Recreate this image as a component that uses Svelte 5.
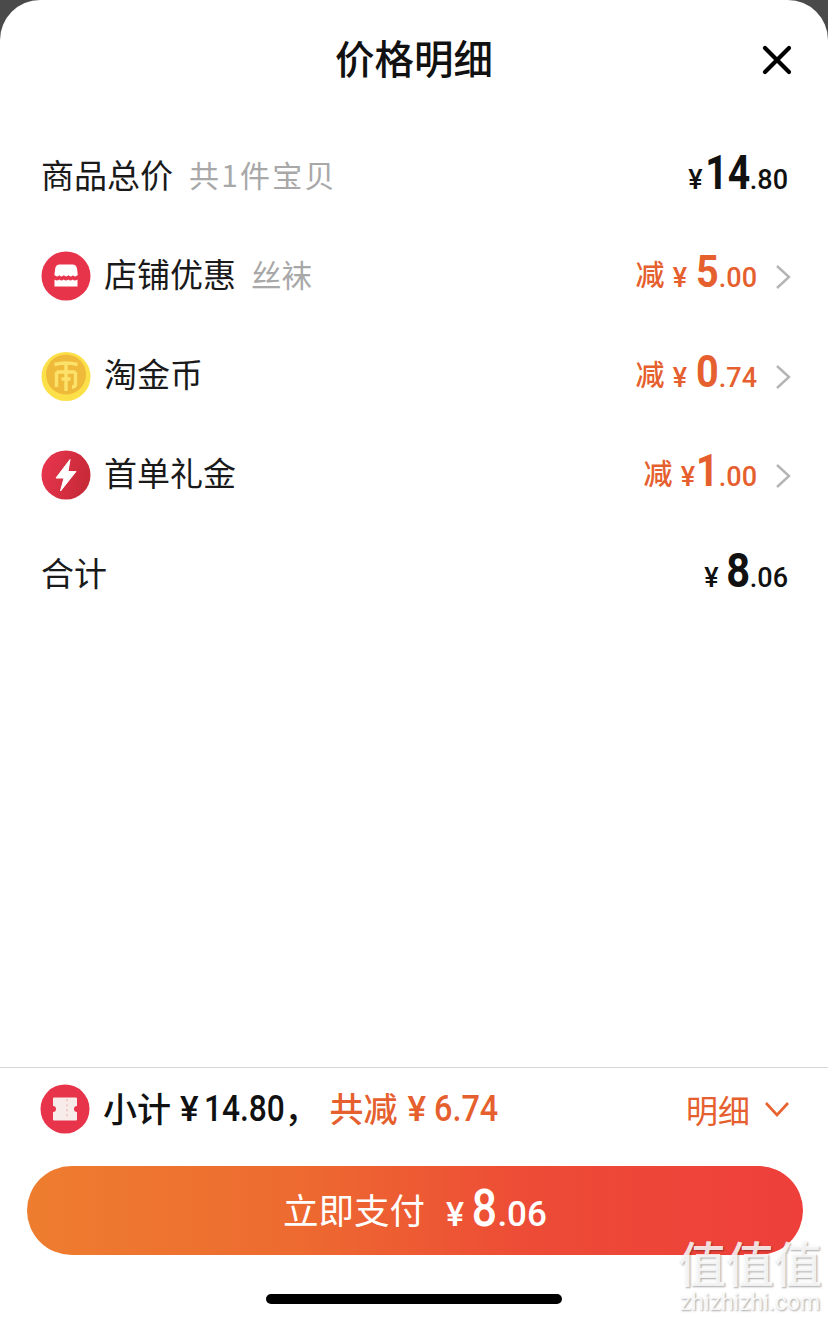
<script>
  const rows = [
    { label: "店铺优惠", note: "丝袜", int: "5", dec: ".00", icon: "shop" },
    { label: "淘金币", note: "", int: "0", dec: ".74", icon: "coin" },
    { label: "首单礼金", note: "", int: "1", dec: ".00", icon: "bolt" },
  ];
</script>

<div class="sheet">
  <header class="head">
    <h1>价格明细</h1>
    <svg class="close" viewBox="0 0 30 30" width="30" height="30">
      <path d="M3 3 L27 27 M27 3 L3 27" stroke="#000" stroke-width="4.2" stroke-linecap="round" />
    </svg>
  </header>

  <section class="list">
    <div class="row">
      <div class="left">
        <span class="label">商品总价</span>
        <span class="note wide">共1件宝贝</span>
      </div>
      <div class="price">
        <span class="yen">¥</span><span class="int two">14</span><span class="dec">.80</span>
      </div>
    </div>

    {#each rows as row}
      <div class="row">
        <div class="left">
          {#if row.icon === "shop"}
            <svg class="icon" viewBox="0 0 50 50">
              <circle cx="25" cy="25" r="24.5" fill="#e8344a" />
              <path d="M18.500 13.500h13c2.500 0 4 1.500 4.500 4l.8 6.500c-2 1.800-3.200 1.800-4.800.2-1.600 1.600-3.200 1.600-4.600.1-1.500 1.500-3.100 1.500-4.600 0-1.400 1.500-3 1.500-4.600-.1-1.600 1.600-2.800 1.600-4.800-.2l.8-6.500c.5-2.500 2-4 4.300-4z" fill="#fff" />
              <path d="M13.500 28.500c2 1.400 3.300 1.400 4.800 0 1.500 1.400 3 1.400 4.400 0 1.500 1.400 3 1.400 4.600 0 1.500 1.400 3 1.400 4.400 0 1.500 1.400 2.800 1.400 4.800 0v7h-23z" fill="#fff" />
            </svg>
          {:else if row.icon === "coin"}
            <svg class="icon" viewBox="0 0 50 50">
              <circle cx="25" cy="25.500" r="24.500" fill="#fbe04a" />
              <circle cx="25" cy="23.500" r="20" fill="#efba3a" />
              <path d="M13.500 13.500q11.500-3 23 0M15.500 21h19M15.500 21v15M34.500 21v12q0 3-3.500 3M25 13v27M20.500 28h9" stroke="#fce26a" stroke-width="3.400" fill="none" />
            </svg>
          {:else}
            <svg class="icon" viewBox="0 0 50 50">
              <defs>
                <linearGradient id="boltbg" x1="0" y1="0" x2="1" y2="0.300">
                  <stop offset="0" stop-color="#ea3650" />
                  <stop offset="1" stop-color="#c82a38" />
                </linearGradient>
              </defs>
              <circle cx="25" cy="25" r="24.500" fill="url(#boltbg)" />
              <path d="M29 9.500 L15 28 H23 L19.500 41 L35 21.500 H27 Z" fill="#fff" stroke="#fff" stroke-width="1" stroke-linejoin="round" />
            </svg>
          {/if}
          <span class="label">{row.label}</span>
          {#if row.note}<span class="note">{row.note}</span>{/if}
        </div>
        <div class="price orange">
          <span class="minus">减</span><span class="yen">¥</span><span class="int" class:one={row.int === "1"}>{row.int}</span><span class="dec">{row.dec}</span>
          <svg class="chev" viewBox="0 0 16 26" width="16" height="26">
            <path d="M2 2 L14 13 L2 24" fill="none" stroke="#b4b4b4" stroke-width="2.400" />
          </svg>
        </div>
      </div>
    {/each}

    <div class="row">
      <div class="left"><span class="label">合计</span></div>
      <div class="price">
        <span class="yen">¥</span><span class="int">8</span><span class="dec">.06</span>
      </div>
    </div>
  </section>

  <footer class="foot">
    <div class="summary">
      <svg class="icon" viewBox="0 0 50 50">
        <circle cx="25" cy="25" r="24.500" fill="#e8344a" />
        <path d="M14 13.500h22a1 1 0 0 1 1 1v7.500a3 3 0 0 0 0 6v7.500a1 1 0 0 1-1 1H14a1 1 0 0 1-1-1V28a3 3 0 0 0 0-6v-7.500a1 1 0 0 1 1-1z" fill="#f8ecea" />
        <path d="M27 15v20" stroke="#f0c8c4" stroke-width="1.500" stroke-dasharray="2.500 2.500" />
      </svg>
      <span class="sub">小计</span><span class="sub-yen">¥</span><span class="sub-num">14.80</span><span class="sub-comma">，</span>
      <span class="saved">共减<span class="saved-yen">¥</span><span class="saved-num">6.74</span></span>
      <span class="detail">明细
        <svg viewBox="0 0 26 16" width="26" height="16">
          <path d="M2 2 L13 14 L24 2" fill="none" stroke="#e8632f" stroke-width="2.600" />
        </svg>
      </span>
    </div>
    <button class="pay">
      <span class="pay-text">立即支付</span>
      <span class="pay-yen">¥</span><span class="pay-int">8</span><span class="pay-dec">.06</span>
    </button>
    <div class="home"></div>
  </footer>

  <div class="mark">
    <div class="mark-big">值值值</div>
    <div class="mark-url">zhizhizhi.com</div>
  </div>
</div>

<style>
  :global(body) {
    margin: 0;
    background: #4a4a4a;
  }

  .sheet {
    position: relative;
    width: 828px;
    height: 1320px;
    background: #fff;
    border-radius: 40px 40px 0 0;
    display: flex;
    flex-direction: column;
    overflow: hidden;
    font-family: "Noto Sans CJK SC", "Noto Sans", sans-serif;
    color: #111;
  }

  .head {
    position: relative;
    height: 118px;
    flex: none;
    display: flex;
    justify-content: center;
    align-items: center;
  }

  h1 {
    margin: 0 0 5px;
    font-size: 39.500px;
    font-weight: 500;
    line-height: 1;
  }

  .close {
    position: absolute;
    right: 36px;
    top: 45px;
  }

  .list {
    margin-top: 9px;
    flex: 1;
  }

  .row {
    height: 99.5px;
    padding: 0 36px 0 41px;
    display: flex;
    align-items: center;
    justify-content: space-between;
  }

  .left {
    display: flex;
    align-items: center;
  }

  .icon {
    width: 50px;
    height: 50px;
    flex: none;
    margin-right: 13px;
  }

  .label {
    font-size: 33px;
    line-height: 1;
    color: #1a1a1a;
    padding-bottom: 5px;
  }

  .note {
    font-size: 30.500px;
    line-height: 1;
    color: #a8a8a8;
    margin-left: 15px;
    padding-bottom: 5px;
  }

  .note.wide {
    font-size: 30px;
    letter-spacing: 2.200px;
    margin-left: 16px;
  }

  .price {
    display: flex;
    align-items: baseline;
    font-family: Roboto, "Noto Sans", sans-serif;
    color: #111;
    padding-right: 4px;
    padding-bottom: 8px;
    position: relative;
    font-weight: 500;
  }

  .price .yen {
    font-size: 27px;
    margin-right: 5px;
  }

  /* the numerals in the shot are narrower than any installed face */
  .price .int {
    font-size: 49px;
    font-weight: 700;
    line-height: 1;
    transform: scaleX(0.85);
    transform-origin: right;
    margin-left: -2px;
  }

  .price .int.two {
    transform: scaleX(0.8);
    margin-left: -14px;
  }

  .price .dec {
    font-size: 27px;
  }

  .price.orange {
    color: #e5602e;
    padding-right: 35px;
  }

  .price.orange .yen {
    margin-right: 8px;
  }

  .price.orange .int {
    font-size: 45px;
    transform: scaleX(0.88);
    margin-left: -2px;
  }

  .price.orange .int.one {
    margin-left: -10px;
  }

  .minus {
    font-family: "Noto Sans CJK SC", sans-serif;
    font-size: 29px;
    margin-right: 8px;
    transform: translateY(-1px);
  }

  .chev {
    position: absolute;
    right: 1px;
    top: 15px;
  }

  .foot {
    flex: none;
    height: 252px;
    border-top: 1px solid #d6d6d6;
    display: flex;
    flex-direction: column;
    align-items: center;
  }

  .summary {
    align-self: stretch;
    height: 82px;
    padding: 0 38px 0 40px;
    display: flex;
    align-items: center;
  }

  .sub {
    font-size: 34px;
    font-weight: 500;
    color: #111;
    padding-bottom: 4px;
  }

  .sub-yen {
    font-family: Roboto, sans-serif;
    font-size: 35px;
    font-weight: 500;
    margin-left: 9px;
    margin-right: 5px;
  }

  .sub-num {
    font-family: Roboto, sans-serif;
    font-size: 36px;
    font-weight: 500;
    transform: scaleX(0.88);
    transform-origin: left;
    margin-right: -11px;
  }

  .sub-comma {
    font-size: 34px;
    font-weight: 500;
    padding-bottom: 4px;
  }

  .saved {
    display: flex;
    align-items: center;
    font-size: 34px;
    font-weight: 500;
    color: #e5602e;
    margin-left: 11px;
    padding-bottom: 4px;
  }

  .saved-yen {
    font-family: Roboto, sans-serif;
    font-size: 35px;
    margin-left: 10px;
    margin-right: 8px;
    padding-top: 4px;
  }

  .saved-num {
    font-family: Roboto, sans-serif;
    font-size: 36px;
    transform: scaleX(0.9);
    transform-origin: left;
    padding-top: 4px;
  }

  .detail {
    margin-left: auto;
    display: flex;
    align-items: center;
    gap: 14px;
    font-size: 32px;
    color: #e5602e;
  }

  .pay {
    margin: 16px 0 0 2px;
    width: 776px;
    height: 89px;
    flex: none;
    border: 0;
    padding: 0;
    border-radius: 45px;
    background: linear-gradient(90deg, #ee7d2f, #ed6a30 35%, #ed4b36 65%, #ee3f3b);
    color: #fff;
    display: flex;
    align-items: baseline;
    justify-content: center;
    line-height: 86px;
    font-family: Roboto, sans-serif;
    font-weight: 500;
  }

  .pay-text {
    font-family: "Noto Sans CJK SC", sans-serif;
    font-size: 35.500px;
    font-weight: 400;
    margin-right: 21px;
    transform: translateY(-2px);
  }

  .pay-yen {
    font-size: 34px;
    margin-right: 8px;
  }

  .pay-int {
    font-size: 51px;
    transform: scaleX(0.87);
    transform-origin: right;
    margin-left: -3.800px;
  }

  .pay-dec {
    font-size: 35px;
  }

  .home {
    width: 296px;
    height: 10px;
    margin-top: 39px;
    border-radius: 5px;
    background: #000;
  }

  .mark {
    position: absolute;
    left: 677px;
    top: 1232px;
    width: 146px;
    text-align: center;
    color: rgba(255, 255, 255, 0.85);
    text-shadow: 1px 1px 2px rgba(0, 0, 0, 0.35);
    pointer-events: none;
  }

  .mark-big {
    font-size: 48px;
    line-height: 58px;
    white-space: nowrap;
    font-weight: 500;
  }

  .mark-url {
    font-family: Roboto, sans-serif;
    font-size: 23px;
    line-height: 26px;
  }
</style>
